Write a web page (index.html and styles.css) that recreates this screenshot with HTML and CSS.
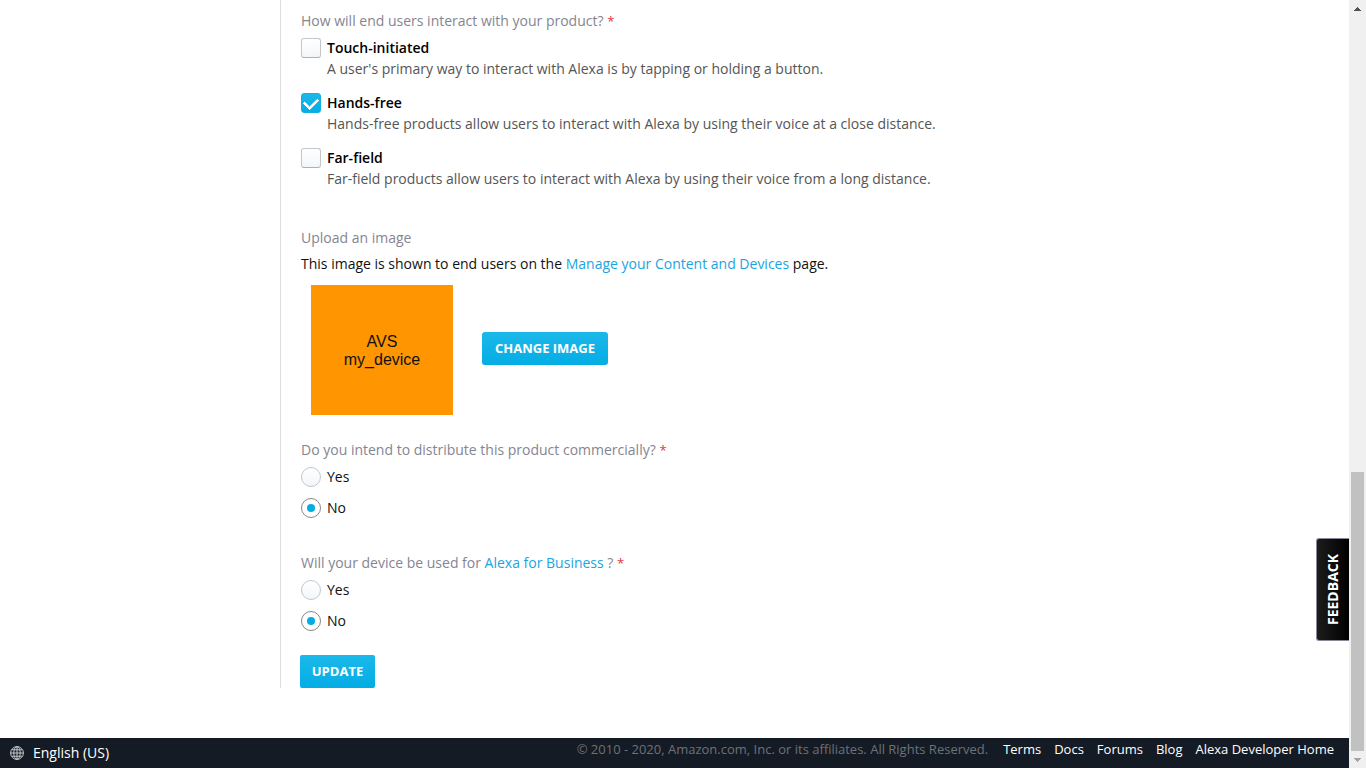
FILE: index.html
```html
<!DOCTYPE html>
<html lang="en">
<head>
<meta charset="utf-8">
<meta name="viewport" content="width=device-width, initial-scale=1">
<title>Product information</title>
<link rel="stylesheet" href="styles.css">
</head>
<body>
<div class="window">
  <div class="page">
    <main class="main">
      <form class="panel">
        <fieldset class="group group-modes">
          <legend class="question">How will end users interact with your product? <span class="required">*</span></legend>
          <div class="mode">
            <label class="option option-strong"><input class="check" type="checkbox">Touch-initiated</label>
            <p class="hint">A user's primary way to interact with Alexa is by tapping or holding a button.</p>
          </div>
          <div class="mode">
            <label class="option option-strong"><input class="check" type="checkbox" checked>Hands-free</label>
            <p class="hint">Hands-free products allow users to interact with Alexa by using their voice at a close distance.</p>
          </div>
          <div class="mode">
            <label class="option option-strong"><input class="check" type="checkbox">Far-field</label>
            <p class="hint">Far-field products allow users to interact with Alexa by using their voice from a long distance.</p>
          </div>
        </fieldset>

        <section class="upload">
          <h2 class="question">Upload an image</h2>
          <p class="note">This image is shown to end users on the <a href="#">Manage your Content and Devices</a> page.</p>
          <div class="upload-row">
            <div class="preview">AVS<br>my_device</div>
            <button class="button button-change" type="button">CHANGE IMAGE</button>
          </div>
        </section>

        <fieldset class="group group-choice">
          <legend class="question">Do you intend to distribute this product commercially? <span class="required">*</span></legend>
          <div class="choices">
            <label class="option"><input class="radio" type="radio" name="commercial">Yes</label>
            <label class="option"><input class="radio" type="radio" name="commercial" checked>No</label>
          </div>
        </fieldset>

        <fieldset class="group group-choice">
          <legend class="question">Will your device be used for <a href="#">Alexa for Business</a> ? <span class="required">*</span></legend>
          <div class="choices">
            <label class="option"><input class="radio" type="radio" name="business">Yes</label>
            <label class="option"><input class="radio" type="radio" name="business" checked>No</label>
          </div>
        </fieldset>

        <button class="button button-update" type="button">UPDATE</button>
      </form>
    </main>

    <footer class="footer">
      <a class="language" href="#">
        <svg class="globe" viewBox="0 0 14 14" aria-hidden="true">
          <g fill="none" stroke="currentColor">
            <circle cx="7" cy="7" r="6.4"/>
            <ellipse cx="7" cy="7" rx="3.2" ry="6.4"/>
            <path d="M7 .6v12.8M.6 7h12.8M1.6 3.8h10.8M1.6 10.2h10.8"/>
          </g>
        </svg>
        English (US)
      </a>
      <div class="legal">
        <span class="copyright">© 2010 - 2020, Amazon.com, Inc. or its affiliates. All Rights Reserved.</span>
        <nav class="links">
          <a href="#">Terms</a>
          <a href="#">Docs</a>
          <a href="#">Forums</a>
          <a href="#">Blog</a>
          <a href="#">Alexa Developer Home</a>
        </nav>
      </div>
    </footer>
    <button class="feedback" type="button">FEEDBACK</button>
  </div>

  <div class="scrollbar" aria-hidden="true">
    <svg class="arrow arrow-up" viewBox="0 0 17 17"><path d="M8 7h1v1h1v1h1v1h1v1H5v-1h1V9h1V8h1z"/></svg>
    <div class="track"><div class="thumb"></div></div>
    <svg class="arrow arrow-down" viewBox="0 0 17 17"><path d="M5 7h7v1h-1v1h-1v1H9v1H8v-1H7V9H6V8H5z"/></svg>
  </div>
</div>
</body>
</html>
```

FILE: styles.css
```css
* { box-sizing: border-box; }

body {
  margin: 0;
  background: #fff;
  color: #111;
  font: 14px/20px "Open Sans", "Noto Sans", sans-serif;
}

a { color: #1ba4e0; text-decoration: none; }
p, h2 { margin: 0; }

.window { display: flex; min-height: 100vh; }
.page {
  position: relative;
  flex: 1;
  display: flex;
  flex-direction: column;
}
.main { flex: 1; padding-left: 280px; }

.panel {
  padding: 11px 20px 0;
  border-left: 1px solid #ddd;
}

.group { margin: 0; padding: 0; border: 0; min-width: 0; }
.question {
  padding: 0;
  color: #858591;
  font-size: 14px;
  font-weight: 400;
}
.required { color: #e0353f; font-size: 13px; }

.group-modes { margin-bottom: 38px; }
.mode { margin-top: 13px; }
.question + .mode { margin-top: 7px; }
.option { display: flex; align-items: center; gap: 6px; color: #111; }
.option-strong { font-weight: 600; color: #000; }
.hint { padding-left: 26px; color: #555; line-height: 22px; }

.check, .radio {
  appearance: none;
  display: grid;
  place-items: center;
  flex: none;
  width: 20px;
  height: 20px;
  margin: 0;
  border: 1px solid #c3c7c9;
  background: linear-gradient(#fff, #f3f6f9);
}
.check { border-radius: 3px; border-bottom-color: #adb1b3; }
.check:checked { border-color: #10b0e6; background: linear-gradient(#1cb8ea, #03ade4); }
.check:checked::before {
  content: "";
  width: 11px;
  height: 7px;
  margin-bottom: 3px;
  border: solid #fff;
  border-width: 0 0 3px 3px;
  border-radius: 1px;
  transform: rotate(-45deg);
}
.radio { border-radius: 50%; }
.radio:checked { border-color: #888; background: #fff; }
.radio:checked::before {
  content: "";
  width: 8px;
  height: 8px;
  border-radius: 50%;
  background: #03ade4;
}

.upload { margin-bottom: 25px; }
.note { margin-top: 6px; }
.upload-row {
  display: flex;
  align-items: center;
  gap: 29px;
  margin: 11px 0 0 10px;
}
.preview {
  display: grid;
  place-content: center;
  width: 142px;
  height: 130px;
  padding-top: 2px;
  background: #ff9500;
  color: #111;
  font: 16px/18px "Liberation Sans", Arial, sans-serif;
  text-align: center;
}

.button {
  height: 33px;
  padding: 0 8px 1px;
  border: 0;
  border-radius: 2px;
  background: linear-gradient(#1cb8ea, #03ade4);
  color: #fff;
  font: 700 13px/20px "Open Sans", "Noto Sans", sans-serif;
}
.button-change { min-width: 126px; margin-bottom: 4px; border-radius: 3px; }
.button-update { display: block; min-width: 75px; margin: 24px 0 0 -1px; }

.group-choice + .group-choice { margin-top: 35px; }
.choices { display: grid; gap: 11px; padding-top: 7px; }

.footer {
  display: flex;
  justify-content: space-between;
  min-height: 30px;
  padding: 1px 15px 2px 10px;
  background: #151b24;
  color: #fff;
  font-size: 13px;
  font-weight: 500;
}
.footer a { color: #fff; }
.language { display: flex; align-items: center; gap: 9px; font-size: 14px; }
.globe { width: 14px; height: 14px; color: #c5c8cb; }
.legal { display: flex; gap: 15px; }
.copyright { color: #6c7278; font-weight: 400; }
.links { display: flex; gap: 13px; }

.feedback {
  position: absolute;
  right: 0;
  bottom: 127px;
  width: 33px;
  height: 103px;
  padding: 0;
  border: 1px solid #889;
  border-left-width: 0;
  border-radius: 0 3px 3px 0;
  background: linear-gradient(to left, #1c1c1c, #000);
  color: #fff;
  font: 700 14px/20px "Open Sans", "Noto Sans", sans-serif;
  writing-mode: vertical-rl;
  transform: rotate(180deg);
}

.scrollbar {
  display: flex;
  flex-direction: column;
  width: 17px;
  background: #f0f0f0;
}
.arrow { width: 17px; height: 17px; shape-rendering: crispEdges; }
.arrow-up { fill: #505050; }
.arrow-down { fill: #a3a3a3; }
.track { flex: 1; display: flex; flex-direction: column; justify-content: flex-end; padding: 0 2px; }
.thumb { height: 38%; background: #c1c1c1; }
```
